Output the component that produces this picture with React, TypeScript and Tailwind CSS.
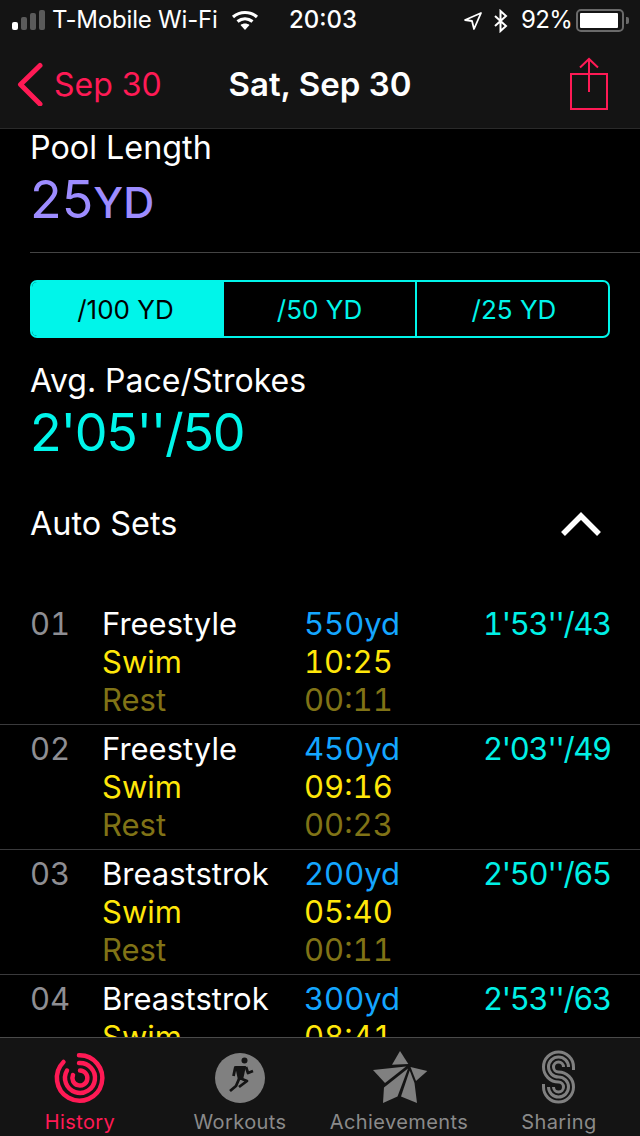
import React from 'react';

const font = { fontFamily: 'Inter, "Liberation Sans", sans-serif' };

const sets = [
  { no: '01', name: 'Freestyle', dist: '550yd', swim: '10:25', rest: '00:11', pace: "1'53''/43" },
  { no: '02', name: 'Freestyle', dist: '450yd', swim: '09:16', rest: '00:23', pace: "2'03''/49" },
  { no: '03', name: 'Breaststrok', dist: '200yd', swim: '05:40', rest: '00:11', pace: "2'50''/65" },
  { no: '04', name: 'Breaststrok', dist: '300yd', swim: '08:41', rest: '00:11', pace: "2'53''/63" },
];

const SetRow: React.FC<{ item: (typeof sets)[number]; last: boolean }> = ({ item, last }) => (
  <div className={`flex py-[5px] text-[31px] leading-[38px] tabular-nums ${last ? '' : 'border-b border-[#3a3a3c]'}`}>
    <div className="w-[102px] pl-[30px] text-[#8e8e93]">{item.no}</div>
    <div className="w-[202px]">
      <div className="text-white">{item.name}</div>
      <div className="text-[#ffe60a]">Swim</div>
      <div className="text-[#807316]">Rest</div>
    </div>
    <div className="w-[179px]">
      <div className="text-[#14a6ff]">{item.dist}</div>
      <div className="text-[#ffe60a]">{item.swim}</div>
      <div className="text-[#807316]">{item.rest}</div>
    </div>
    <div className="text-[#00f0e6] tracking-[-1.3px]">{item.pace}</div>
  </div>
);

const TabItem: React.FC<{ label: string; active?: boolean; width: string; children: React.ReactNode }> = ({
  label,
  active,
  width,
  children,
}) => (
  <div className={`flex flex-col items-center ${width}`}>
    <div className="h-[60px] flex items-center justify-center">{children}</div>
    <div
      className={`mt-[2px] text-[20px] leading-[24px] tracking-[0.4px] ${active ? 'text-[#ff1a55]' : 'text-[#8a8a8a]'}`}
    >
      {label}
    </div>
  </div>
);

export default function App() {
  return (
    <div style={font} className="w-[640px] h-[1136px] bg-black flex flex-col overflow-hidden text-white">
      <div className="bg-[#141414] border-b border-[#2a2a2a] h-[129px] shrink-0">
        <div className="h-[40px] relative text-[24px] leading-[40px]">
          <div className="absolute left-[12px] top-[10px] h-[20px] flex items-end gap-[3px]">
            <div className="w-[6px] h-[8px] rounded-[2px] bg-white" />
            <div className="w-[6px] h-[13px] rounded-[2px] bg-[#5a5a5a]" />
            <div className="w-[6px] h-[17px] rounded-[2px] bg-[#5a5a5a]" />
            <div className="w-[6px] h-[20px] rounded-[2px] bg-[#5a5a5a]" />
          </div>
          <span className="absolute left-[52px] top-0 tracking-[-0.2px]">T-Mobile Wi-Fi</span>
          <svg className="absolute left-[231px] top-[10px]" width="28" height="20" viewBox="0 0 28 20" fill="none" stroke="white" strokeWidth="3.2">
            <path d="M2 7c7-6 17-6 24 0" />
            <path d="M6.500 11.500c4.500-3.500 10.500-3.500 15 0" />
            <path d="M14 20l-4.500-5c2.500-2 6.500-2 9 0z" fill="white" stroke="none" />
          </svg>
          <span className="absolute left-[289px] top-0 font-medium">20:03</span>
          <svg className="absolute left-[463px] top-[11px]" width="20" height="20" viewBox="0 0 20 20" fill="none" stroke="white" strokeWidth="1.800" strokeLinejoin="round">
            <path d="M18 2L2 9l7 1 2 8z" />
          </svg>
          <svg className="absolute left-[493px] top-[9px]" width="16" height="24" viewBox="0 0 16 24" fill="none" stroke="white" strokeWidth="2">
            <path d="M2 7l11 10-5.500 5V2L13 7 2 17" />
          </svg>
          <span className="absolute left-[521px] top-0 tracking-[-0.6px]">92%</span>
          <div className="absolute left-[576px] top-[9px] w-[48px] h-[23px] rounded-[5px] border-2 border-[#6a6a6a] p-[2px]">
            <div className="w-[38px] h-full bg-white rounded-[1px]" />
          </div>
          <div className="absolute left-[626px] top-[17px] w-[3px] h-[7px] rounded-r-[2px] bg-[#6a6a6a]" />
        </div>
        <div className="h-[88px] relative flex items-center justify-center">
          <svg className="absolute left-[17px] top-[22px]" width="26" height="44" viewBox="0 0 26 44" fill="none" stroke="#ff1a55" strokeWidth="5" strokeLinecap="round" strokeLinejoin="round">
            <path d="M23 3.500L3.500 22.500 23 42" />
          </svg>
          <span className="absolute left-[54px] top-[23px] text-[32px] leading-[44px] text-[#ff1a55]">Sep 30</span>
          <span className="text-[33px] font-semibold leading-[44px]">Sat, Sep 30</span>
          <svg className="absolute left-[569px] top-[17px]" width="40" height="54" viewBox="0 0 40 54" fill="none" stroke="#ff1a55" strokeWidth="2">
            <path d="M2 17h36v35H2z" />
            <path d="M20 35V2M11 10.500 20 2l9 8.500" />
          </svg>
        </div>
      </div>

      <div className="flex-1 min-h-0 overflow-hidden">
        <div className="pl-[30px] text-[32.3px] leading-[38px]">Pool Length</div>
        <div className="pl-[30px] pt-[3px] h-[85px] flex items-baseline text-[#9d8cff] leading-[60px]">
          <span className="text-[52px]">25</span>
          <span className="text-[43px] font-medium">YD</span>
        </div>
        <div className="ml-[30px] h-px bg-[#444]" />

        <div className="mx-[30px] mt-[27px] h-[58px] rounded-[7px] border-2 border-[#00f5ea] flex text-[26px] overflow-hidden">
          <div className="w-[192px] bg-[#00f5ea] text-black flex items-center justify-center pr-[5px]">/100 YD</div>
          <div className="w-[193px] border-r-2 border-[#00f5ea] text-[#00f5ea] flex items-center justify-center">/50 YD</div>
          <div className="flex-1 text-[#00f5ea] flex items-center justify-center pl-[3px]">/25 YD</div>
        </div>

        <div className="pl-[30px] mt-[24px] text-[32px] leading-[38px]">Avg. Pace/Strokes</div>
        <div className="pl-[30px] text-[52px] leading-[66px] tracking-[-1.3px] text-[#00f5ea]">2'05''/50</div>

        <div className="mt-[33px] pl-[30px] pr-[38px] flex items-center justify-between h-[50px]">
          <span className="text-[32.4px]">Auto Sets</span>
          <svg width="42" height="26" viewBox="0 0 42 26" fill="none" stroke="white" strokeWidth="5.500">
            <path d="M3 23 21 5l18 18" />
          </svg>
        </div>

        <div className="mt-[51px]">
          {sets.map((item, i) => (
            <SetRow key={item.no} item={item} last={i === sets.length - 1} />
          ))}
        </div>
      </div>

      <div className="h-[99px] shrink-0 bg-[#141414] border-t border-[#4a4a4a] pt-[10px] flex">
        <TabItem label="History" active width="w-[160px]">
          <svg width="60" height="60" viewBox="0 0 60 60" fill="none" stroke="#ff1a55" strokeWidth="4.500" strokeLinecap="round">
            <path d="M29 7.300A22.700 22.700 0 1 1 13.500 14" />
            <path d="M29 15A15 15 0 1 1 17 22.500" />
            <path d="M30 22.500A7.500 7.500 0 1 1 23 27" />
          </svg>
        </TabItem>
        <TabItem label="Workouts" width="w-[160px]">
          <svg width="60" height="60" viewBox="0 0 60 60">
            <circle cx="30" cy="30" r="25" fill="#808080" />
            <circle cx="34.500" cy="12.500" r="3" fill="#141414" />
            <path d="M25 18h11l-3 14h-5z" fill="#141414" />
            <g fill="none" stroke="#141414" strokeWidth="2.800" strokeLinejoin="round">
              <path d="M25.500 18.500 23.500 28" />
              <path d="M36 19l2 6 5-2" />
              <path d="M32 31l5 2-8 6" />
              <path d="M29 31l-3 7-6 5" />
            </g>
          </svg>
        </TabItem>
        <TabItem label="Achievements" width="w-[158px]">
          <svg width="60" height="60" viewBox="0 0 60 60" fill="#808080">
            <path d="M31 3l-8 13.700 16.300-.7z" />
            <path d="M4 22l33-3.500L16 35z" />
            <path d="M39 20.500 15 39.500 14 55l14.500-6.500z" />
            <path d="M40.700 22.500 32 48.500 48 55l-2.500-20z" />
            <path d="M41.500 19 58.300 23 47 33z" />
          </svg>
        </TabItem>
        <TabItem label="Sharing" width="w-[162px]">
          <svg width="60" height="60" viewBox="0 0 60 60" fill="none" stroke="#808080" strokeWidth="3">
            <path d="M44.500 22V19A15 15 0 0 0 14.500 19A15 15 0 0 0 29.500 34A5 5 0 0 1 29.500 44A5 5 0 0 1 24.500 39" />
            <path d="M39.500 19A10 10 0 0 0 19.500 19A10 10 0 0 0 29.500 29A10 10 0 0 1 29.500 49A10 10 0 0 1 19.500 39" />
            <path d="M34.500 19A5 5 0 0 0 24.500 19A5 5 0 0 0 29.500 24A15 15 0 0 1 29.500 54A15 15 0 0 1 14.500 39V36" />
          </svg>
        </TabItem>
      </div>
    </div>
  );
}
